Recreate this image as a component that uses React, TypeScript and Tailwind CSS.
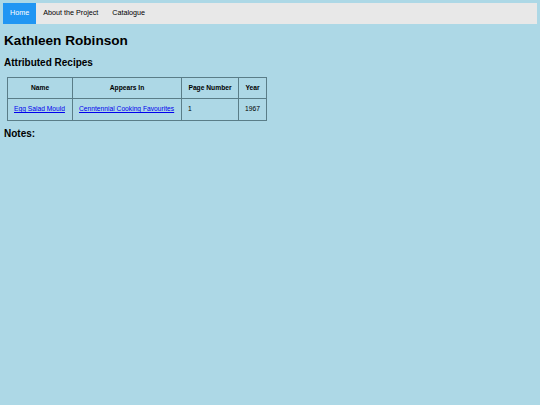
export default function App() {
  const recipes = [
    {
      name: "Egg Salad Mould",
      appearsIn: "Cenntennial Cooking Favourites",
      page: "1",
      year: "1967",
    },
  ];

  return (
    <div className="min-h-[405px] bg-[#add8e6] pt-[3px] font-['Liberation_Sans',Arial,sans-serif] text-black">
      <nav className="mx-[3px] flex h-[21px] bg-[#e8e8e8] text-[7.2px]">
        <a className="flex items-center bg-[#2196f3] px-[7px] text-white">Home</a>
        <a className="flex items-center px-[7px]">About the Project</a>
        <a className="flex items-center px-[7px]">Catalogue</a>
      </nav>

      <div className="px-[4px]">
        <h1 className="mt-[8px] text-[13.6px] font-bold leading-[18px]">Kathleen Robinson</h1>
        <h3 className="mt-[6px] text-[10px] font-bold leading-[13px]">Attributed Recipes</h3>

        <table className="mt-[8px] ml-[3px] border-collapse whitespace-nowrap border border-[#5a7d88] text-[6.7px]">
          <thead>
            <tr className="h-[21px]">
              <th className="border border-[#5a7d88] px-[6px] font-bold w-[65px]">Name</th>
              <th className="border border-[#5a7d88] px-[6px] font-bold w-[109px]">Appears In</th>
              <th className="border border-[#5a7d88] px-[6px] font-bold w-[57px]">Page Number</th>
              <th className="border border-[#5a7d88] px-[6px] font-bold w-[28px]">Year</th>
            </tr>
          </thead>
          <tbody>
            {recipes.map((r) => (
              <tr key={r.name} className="h-[22px]">
                <td className="border border-[#5a7d88] px-[6px]">
                  <a className="text-[#0000ee] underline">{r.name}</a>
                </td>
                <td className="border border-[#5a7d88] px-[6px]">
                  <a className="text-[#0000ee] underline">{r.appearsIn}</a>
                </td>
                <td className="border border-[#5a7d88] px-[6px]">{r.page}</td>
                <td className="border border-[#5a7d88] px-[6px]">{r.year}</td>
              </tr>
            ))}
          </tbody>
        </table>

        <h3 className="mt-[6px] text-[10px] font-bold leading-[13px]">Notes:</h3>
      </div>
    </div>
  );
}
